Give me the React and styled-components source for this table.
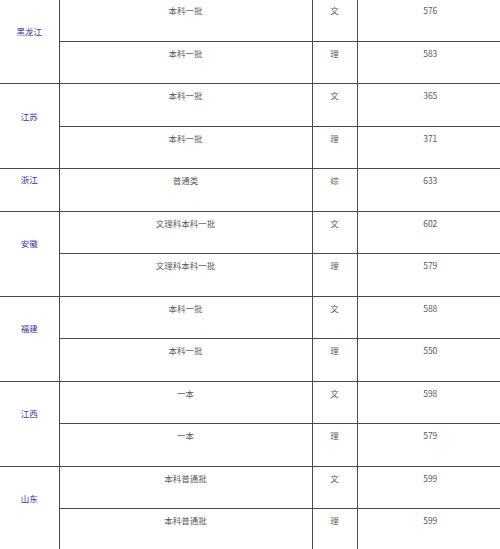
import React from 'react'
import styled, { createGlobalStyle } from 'styled-components'

const GlobalStyle = createGlobalStyle`
    html, body {
        margin: 0;
        padding: 0;
        background: #fff;
        overflow: hidden;
    }
    body {
        font-family: "Noto Sans CJK SC", "Noto Sans", sans-serif;
    }
`

const columns = [59, 253, 45, 146]

const rows = [
    { province: '黑龙江', items: [['本科一批', '文', '576'], ['本科一批', '理', '583']] },
    { province: '江苏', items: [['本科一批', '文', '365'], ['本科一批', '理', '371']] },
    { province: '浙江', items: [['普通类', '综', '633']] },
    { province: '安徽', items: [['文理科本科一批', '文', '602'], ['文理科本科一批', '理', '579']] },
    { province: '福建', items: [['本科一批', '文', '588'], ['本科一批', '理', '550']] },
    { province: '江西', items: [['一本', '文', '598'], ['一本', '理', '579']] },
    { province: '山东', items: [['本科普通批', '文', '599'], ['本科普通批', '理', '599']] },
]

function App() {
    return (
        <>
            <GlobalStyle />
            <Table>
                <colgroup>
                    {columns.map((w, i) => <Col key={i} $w={w} />)}
                </colgroup>
                <tbody>
                    {rows.map((group) =>
                        group.items.map((item, i) => (
                            <Row key={group.province + i}>
                                {i === 0 && (
                                    <Province rowSpan={group.items.length}>{group.province}</Province>
                                )}
                                <Cell>{item[0]}</Cell>
                                <Cell>{item[1]}</Cell>
                                <Cell $last>{item[2]}</Cell>
                            </Row>
                        ))
                    )}
                </tbody>
            </Table>
        </>
    )
}

const Table = styled.table`
    border-collapse: collapse;
    table-layout: fixed;
    width: 503px;
    margin-top: -2px;
    color: #5a5a5a;
    font-size: 8.5px;
`

const Col = styled.col`
    width: ${(p) => p.$w}px;
`

const Row = styled.tr`
    height: 42.5px;
`

const Cell = styled.td`
    border: 1px solid #4a4a4a;
    border-right: ${(p) => (p.$last ? 'none' : '1px solid #4a4a4a')};
    text-align: center;
    vertical-align: top;
    padding: 5px 0 0;
    line-height: 12px;
`

const Province = styled.td`
    border: 1px solid #4a4a4a;
    border-left: none;
    text-align: center;
    vertical-align: middle;
    padding: 0 0 21px;
    line-height: 12px;
    color: #35359a;
`

export default App
